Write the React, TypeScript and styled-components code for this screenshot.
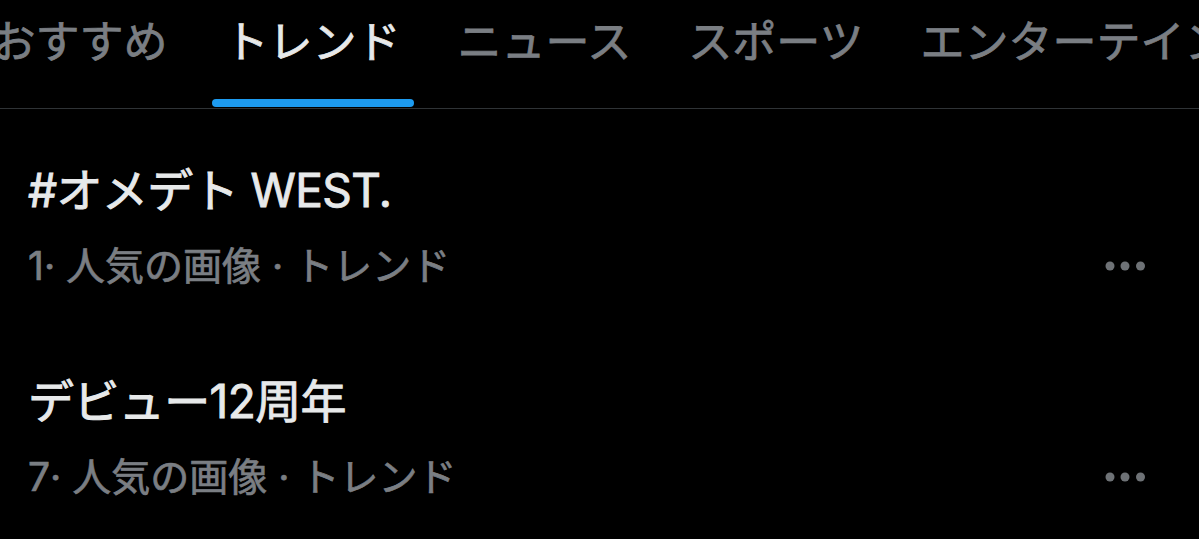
import styled, { createGlobalStyle } from 'styled-components';

const GlobalStyle = createGlobalStyle`
	html, body {
		margin: 0;
		padding: 0;
		background: #000;
	}
	body {
		font-family: Inter, "Noto Sans CJK JP", sans-serif;
		-webkit-font-smoothing: antialiased;
	}
`

const tabs = ['おすすめ', 'トレンド', 'ニュース', 'スポーツ', 'エンターテインメント'];

const trends = [
	{ title: '#オメデト WEST.', rank: 1 },
	{ title: 'デビュー12周年', rank: 7 },
];

const MoreIcon = () => (
	<svg width='40' height='10' viewBox='0 0 40 10' aria-hidden='true'>
		<circle cx='5' cy='5' r='4.5' fill='currentColor'/>
		<circle cx='20' cy='5' r='4.5' fill='currentColor'/>
		<circle cx='35.5' cy='5' r='4.5' fill='currentColor'/>
	</svg>
)

export default function App() {
	return (
		<>
			<GlobalStyle/>
			<Page>
				<TabBar>
					{tabs.map((tab) => (
						<Tab key={tab} active={tab === 'トレンド'}>
							<Label>{tab}</Label>
							{tab === 'トレンド' && <Indicator/>}
						</Tab>
					))}
				</TabBar>
				<List>
					{trends.map((item) => (
						<Row key={item.title}>
							<Title>{item.title}</Title>
							<Meta>
								<Sub>{item.rank}· 人気の画像 · トレンド</Sub>
								<More><MoreIcon/></More>
							</Meta>
						</Row>
					))}
				</List>
			</Page>
		</>
	)
}

const Page = styled.div`
	width: 1199px;
	height: 539px;
	overflow: hidden;
	background: #000;
`

const TabBar = styled.nav`
	display: flex;
	height: 108px;
	margin-left: -37px;
	border-bottom: 1px solid #2f3336;
	white-space: nowrap;
`

const Tab = styled.div<{active: boolean}>`
	display: flex;
	flex-direction: column;
	align-items: center;
	flex-shrink: 0;
	padding: 0 28.5px;
	color: ${({active}) => active ? '#e7e9ea' : '#7a7e83'};
	font-weight: 400;
	font-size: 44px;
	-webkit-text-stroke: 0.8px currentColor;
`

const Label = styled.span`
	display: block;
	margin-top: 20px;
	line-height: 44px;
`

const Indicator = styled.div`
	align-self: stretch;
	margin: auto -13px 1px;
	height: 8px;
	border-radius: 4px;
	background: #1d9bf0;
`

const List = styled.div`
	display: flex;
	flex-direction: column;
`

const Row = styled.div`
	display: flex;
	flex-direction: column;
	gap: 24px;
	padding: 53px 54px 30px 28px;
`

const Title = styled.div`
	color: #e7e9ea;
	font-size: 46px;
	font-weight: 400;
	line-height: 56px;
	letter-spacing: -0.6px;
	-webkit-text-stroke: 0.9px currentColor;
`

const Meta = styled.div`
	display: flex;
	align-items: center;
	justify-content: space-between;
	height: 48px;
`

const Sub = styled.span`
	color: #7a7e83;
	font-size: 39px;
	font-weight: 400;
	line-height: 48px;
	-webkit-text-stroke: 0.7px currentColor;
`

const More = styled.span`
	display: flex;
	color: #6e7276;
`
